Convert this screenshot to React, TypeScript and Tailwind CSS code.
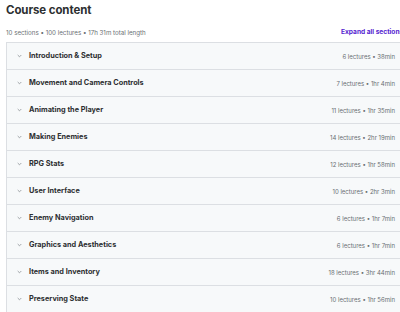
import React from "react";

const sections = [
  ["Introduction & Setup", "6 lectures • 38min"],
  ["Movement and Camera Controls", "7 lectures • 1hr 4min"],
  ["Animating the Player", "11 lectures • 1hr 35min"],
  ["Making Enemies", "14 lectures • 2hr 19min"],
  ["RPG Stats", "12 lectures • 1hr 58min"],
  ["User Interface", "10 lectures • 2hr 3min"],
  ["Enemy Navigation", "6 lectures • 1hr 7min"],
  ["Graphics and Aesthetics", "6 lectures • 1hr 7min"],
  ["Items and Inventory", "18 lectures • 3hr 44min"],
  ["Preserving State", "10 lectures • 1hr 56min"],
];

function Chevron() {
  return (
    <svg width="5" height="4" viewBox="0 0 5 4" fill="none">
      <path d="M0.7 1 L2.5 2.8 L4.3 1" stroke="#8a8f93" strokeWidth="0.8" />
    </svg>
  );
}

export default function App() {
  return (
    <div
      className="w-[400px] h-[312px] overflow-hidden bg-white pl-[6px] text-[#2d2f31]"
      style={{ fontFamily: "Inter, 'Noto Sans', sans-serif" }}
    >
      <div className="pt-[2px] text-[11.5px] font-bold leading-[16px] tracking-[-0.1px]">Course content</div>
      <div className="mt-[10px] flex items-center h-[10px]">
        <span className="text-[6.2px] text-[#6a6f73]">10 sections • 100 lectures • 17h 31m total length</span>
        <span className="ml-auto text-[6.6px] font-bold text-[#5624d0] whitespace-nowrap w-[59px] overflow-visible">Expand all sections</span>
      </div>
      <div className="mt-[4px] border-l border-t border-[#dcdfe3]">
        {sections.map(([t, m]) => (
          <div key={t} className="h-[27px] flex items-center bg-[#f7f9fa] border-b border-[#dcdfe3] pl-[10px] pr-[5px]">
            <Chevron />
            <span className="ml-[7px] text-[7.3px] font-bold text-[#2d2f31]">{t}</span>
            <span className="ml-auto text-[6px] text-[#6a6f73]">{m}</span>
          </div>
        ))}
      </div>
    </div>
  );
}
